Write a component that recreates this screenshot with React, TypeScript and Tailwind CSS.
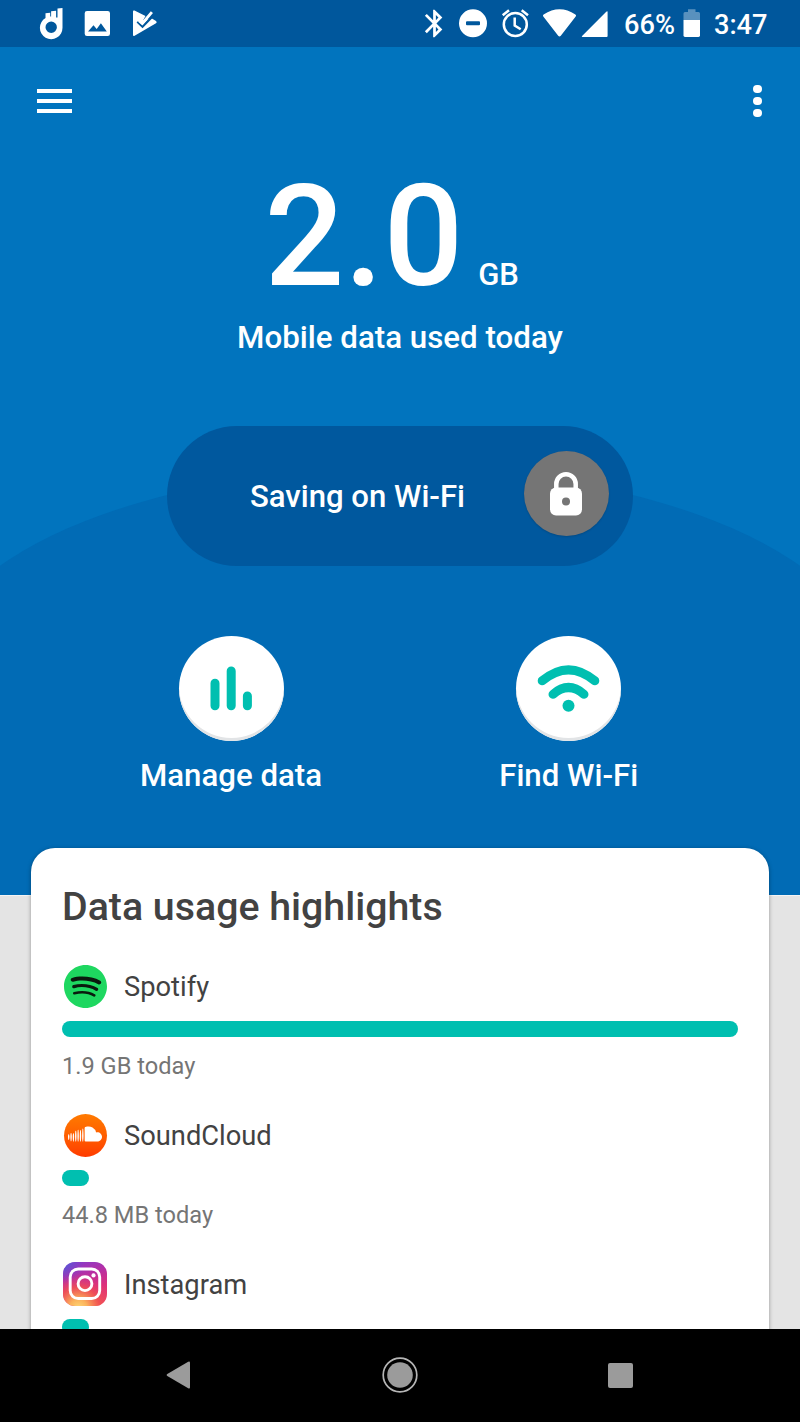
import { FC, ReactNode } from "react";
import { MdBluetooth } from "react-icons/md";
import { SiSoundcloud, SiSpotify } from "react-icons/si";

type AppUsage = {
  name: string;
  amount: string;
  percent: number;
  icon: ReactNode;
};

/* Status bar */
const StatusBar: FC = () => {
  return (
    <header className="flex h-[47px] shrink-0 items-center bg-[#00579c] text-white">
      <svg className="ml-9 h-[47px] w-[132px]" viewBox="36 0 132 47" fill="currentColor">
        {/* Hand */}
        <path d="M57.500 8.400 62.500 8v19.800a11.300 11.300 0 1 1-17-9.700v-4.900l4.700-.4v3.800h.9v-5.400l5-.4v6.600h1.400zM51.200 21.500a5.700 5.700 0 1 0 0 11.400 5.700 5.700 0 0 0 0-11.400z" fillRule="evenodd" />
        {/* Picture */}
        <path d="M87 11h20.700a2.300 2.300 0 0 1 2.300 2.300v20.400a2.300 2.300 0 0 1-2.300 2.300H87a2.300 2.300 0 0 1-2.300-2.300V13.300A2.300 2.300 0 0 1 87 11zM88 31.400h18.800l-5.900-8.200-4.200 5.800-3.200-3.800z" fillRule="evenodd" />
        {/* Play check */}
        <path d="M133 11.500q0-1.600 1.500-.9L145.500 16l-2.500 4.500 8.500-2.200 4.500 2.700q1.500 1.200 0 2.300L134.600 35.700q-1.600.8-1.600-1z" />
        <path d="m137.300 21.800 5.200 4.800L153 16" fill="none" stroke="#00579c" strokeWidth="2.200" />
        <path d="m139 20.600 3.300 2.900 9.600-11.300" fill="none" stroke="currentColor" strokeWidth="2.800" />
      </svg>
      <div className="ml-auto flex items-center">
        <MdBluetooth className="size-[33px]" />
        <svg className="ml-[8px] h-[47px] w-[150px]" viewBox="459 0 150 47" fill="currentColor">
          {/* Do not disturb */}
          <path d="M473 9.300a14 14 0 1 0 0 28 14 14 0 0 0 0-28zm-6 12h12q1 0 1 1v2q0 1-1 1h-12q-1 0-1-1v-2q0-1 1-1z" fillRule="evenodd" />
          {/* Alarm */}
          <g fill="none" stroke="currentColor" strokeWidth="2.500">
            <circle cx="515.300" cy="24.600" r="11.500" />
            <path d="M514.700 17.500v8l6 3.800M502.700 15.300l6.300-5M528 15.300l-6.300-5" />
          </g>
          {/* Wi-Fi */}
          <path d="M543.300 16.500q-1-1 .3-1.900 16-10.500 31.800 0 1.300.9.300 1.900L560.800 35.800q-1.300 1.300-2.600 0z" />
          {/* Signal */}
          <path d="M607.600 12v24q0 1-1 1h-24q-1.500 0-.5-1l23.900-24q1.600-1.300 1.600 0z" />
        </svg>
        <span className="mt-[4px] ml-[15px] w-[51px] text-[27.200px] leading-none font-medium">66%</span>
        <svg className="ml-[8px] h-[47px] w-[18px]" viewBox="683 0 18 47" fill="currentColor">
          <path d="M683.500 20v-6.500q0-1.500 1.500-1.500h3V9.300h7.500V12h3q1.500 0 1.500 1.500V20z" opacity=".35" />
          <path d="M683.500 20H700v15.600q0 1.400-1.500 1.400H685q-1.500 0-1.500-1.400z" />
        </svg>
        <span className="mt-[4px] mr-[30px] ml-[13px] w-[56px] text-[27.200px] leading-none font-medium">3:47</span>
      </div>
    </header>
  );
};

/* App bar */
const AppBar: FC = () => {
  return (
    <div className="flex h-[108px] items-center justify-between pr-[38.500px] pl-[37px]">
      <button className="flex flex-col gap-[6px]" aria-label="Menu">
        <span className="h-[4px] w-[35px] bg-white" />
        <span className="h-[4px] w-[35px] bg-white" />
        <span className="h-[4px] w-[35px] bg-white" />
      </button>
      <button className="flex flex-col gap-[3.500px]" aria-label="More options">
        <span className="size-[8.300px] rounded-full bg-white" />
        <span className="size-[8.300px] rounded-full bg-white" />
        <span className="size-[8.300px] rounded-full bg-white" />
      </button>
    </div>
  );
};

/* Round shortcut button with a label */
const Shortcut: FC<{ label: string; children: ReactNode }> = ({ label, children }) => {
  return (
    <div className="flex w-[200px] flex-col items-center">
      <button className="size-[105px] rounded-full bg-white shadow-[inset_0_-3px_0_#e2e4e6]">
        <svg className="size-[105px]" viewBox="0 0 105 105">
          {children}
        </svg>
      </button>
      <span className="mt-[15px] text-[31.200px] leading-10 font-medium whitespace-nowrap">{label}</span>
    </div>
  );
};

const Hero: FC = () => {
  return (
    <section className="relative h-[849px] shrink-0 overflow-hidden border-b border-[#f4f4f4] bg-[#0174be] text-white">
      {/* Darker dome behind the content */}
      <div className="absolute top-[421px] left-1/2 h-[440px] w-[940px] -translate-x-1/2 rounded-[470px_470px_0_0/206px_206px_0_0] bg-[#016bb5]" />

      <div className="relative flex flex-col">
        <AppBar />

        <div className="mt-[12px] flex h-[140px] items-baseline pl-[264.500px] font-medium">
          <span className="text-[140.500px] leading-[140px]">2.0</span>
          <span className="ml-[15px] text-[31px]">GB</span>
        </div>
        <p className="mt-[11px] text-center text-[31.300px] leading-10 font-medium">Mobile data used today</p>

        {/* Saving status */}
        <div className="mx-auto mt-[68px] flex h-[140px] w-[466px] items-center rounded-full bg-[#00589e] pr-6">
          <span className="mt-px ml-[83px] text-[31.100px] leading-10 font-medium">Saving on Wi-Fi</span>
          <div className="mb-[5px] ml-auto flex size-[85px] items-center justify-center rounded-full bg-[#757575] shadow-[0_1px_2px_rgba(0,0,0,0.15)]">
            <svg className="mr-px h-[44px] w-[34px]" viewBox="0 0 34 44">
              <path d="M7.300 18v-6a9.700 9.700 0 0 1 19.400 0v6" fill="none" stroke="#fff" strokeWidth="4.500" />
              <rect x="1" y="15.500" width="32" height="28" rx="6" fill="#fff" />
              <circle cx="17" cy="29.500" r="4" fill="#757575" />
            </svg>
          </div>
        </div>

        {/* Shortcuts */}
        <div className="mt-[70px] flex justify-between pr-[131.300px] pl-[131px]">
          <Shortcut label="Manage data">
            <g stroke="#00bfb0" strokeWidth="9" strokeLinecap="round">
              <path d="M36 47.300v22.500M52.200 35v34.800M68.400 60v9.800" />
            </g>
          </Shortcut>
          <Shortcut label="Find Wi-Fi">
            <g fill="none" stroke="#00bfb0" strokeWidth="9" strokeLinecap="round">
              <path d="M26.200 44.800q26.300-22 52.600 0M37 58.300q15.500-13.500 31 0" />
            </g>
            <circle cx="52.500" cy="69.800" r="6" fill="#00bfb0" />
          </Shortcut>
        </div>
      </div>
    </section>
  );
};

const SpotifyIcon: FC = () => {
  return (
    <div className="flex size-[43px] items-center justify-center rounded-full bg-[radial-gradient(circle,#0a1a0e_60%,transparent_61%)]">
      <SiSpotify className="size-[43px] text-[#1ed760]" />
    </div>
  );
};

const SoundCloudIcon: FC = () => {
  return (
    <div className="flex size-[43px] items-center justify-center rounded-full bg-linear-to-b from-[#ff7a00] to-[#ff3a00] pb-[3px]">
      <SiSoundcloud className="size-[34px] text-white" />
    </div>
  );
};

const InstagramIcon: FC = () => {
  return (
    <svg className="size-[44px]" viewBox="0 0 44 44">
      <defs>
        <linearGradient id="ig-base" x1="0.300" y1="0" x2="0.600" y2="1">
          <stop offset="0" stopColor="#8a3ac8" />
          <stop offset=".3" stopColor="#b52fa5" />
          <stop offset=".65" stopColor="#dd2f7b" />
          <stop offset="1" stopColor="#ee4a5c" />
        </linearGradient>
        <radialGradient id="ig-warm" cx=".35" cy="1.050" r=".8">
          <stop offset="0" stopColor="#fdd876" />
          <stop offset=".25" stopColor="#fbb35c" />
          <stop offset=".6" stopColor="#f2554e" stopOpacity=".8" />
          <stop offset="1" stopColor="#e0347a" stopOpacity="0" />
        </radialGradient>
        <radialGradient id="ig-cool" cx="0" cy="0" r=".5">
          <stop offset="0" stopColor="#4a62d8" />
          <stop offset="1" stopColor="#7a3fcb" stopOpacity="0" />
        </radialGradient>
      </defs>
      <rect width="44" height="44" rx="12" fill="url(#ig-base)" />
      <rect width="44" height="44" rx="12" fill="url(#ig-warm)" />
      <rect width="44" height="44" rx="12" fill="url(#ig-cool)" />
      <g fill="none" stroke="#fff" strokeWidth="2.900">
        <rect x="7.200" y="7" width="29.500" height="29.500" rx="8" />
        <circle cx="22" cy="21.700" r="6.900" />
      </g>
      <circle cx="30.500" cy="13.400" r="2.100" fill="#fff" />
    </svg>
  );
};

const usage: AppUsage[] = [
  { name: "Spotify", amount: "1.9 GB today", percent: 100, icon: <SpotifyIcon /> },
  { name: "SoundCloud", amount: "44.8 MB today", percent: 4, icon: <SoundCloudIcon /> },
  { name: "Instagram", amount: "", percent: 4, icon: <InstagramIcon /> },
];

const UsageRow: FC<{ item: AppUsage }> = ({ item }) => {
  return (
    <li className="flex flex-col">
      <div className="flex h-[46px] items-center">
        <div className="flex w-[46px] justify-center">{item.icon}</div>
        <span className="mt-px ml-4 text-[27.300px] leading-10 text-[#424242]">{item.name}</span>
      </div>
      <div className="mt-3 h-4 rounded-full bg-[#00bfb0]" style={{ width: `${item.percent}%` }} />
      <span className="mt-[14px] h-[30px] text-[23.600px] leading-[30px] text-[#757575]">{item.amount}</span>
    </li>
  );
};

/* Highlights card */
const Highlights: FC = () => {
  return (
    <section className="relative mx-[31px] -mt-[48px] h-[600px] shrink-0 rounded-t-3xl bg-white px-[31px] pt-[39px] shadow-[0_1px_4px_rgba(0,0,0,0.35)]">
      <h2 className="text-[39.300px] leading-10 font-medium text-[#424242]">Data usage highlights</h2>
      <ul className="mt-9 flex flex-col gap-[31px]">
        {usage.map((item) => (
          <UsageRow key={item.name} item={item} />
        ))}
      </ul>
    </section>
  );
};

/* Android navigation keys */
const NavBar: FC = () => {
  return (
    <nav className="flex h-[93px] shrink-0 items-center justify-between bg-black pr-[167px] pb-px pl-[166px]">
      <svg className="h-[28px] w-[25px]" viewBox="0 0 25 28" fill="#9b9b9b">
        <path d="M1.300 13 22.200.8Q24 0 24 1.800v24.500q0 1.800-1.800 1L1.300 15q-1.300-1 0-2z" />
      </svg>
      <svg className="size-[36px]" viewBox="0 0 36 36">
        <circle cx="18" cy="18" r="16.800" fill="none" stroke="#b5b5b5" strokeWidth="1.700" />
        <circle cx="18" cy="18" r="12.800" fill="#9b9b9b" />
      </svg>
      <span className="size-[25px] rounded-[2px] bg-[#9b9b9b]" />
    </nav>
  );
};

const App: FC = () => {
  return (
    <div className="flex h-[1422px] w-[800px] flex-col overflow-hidden bg-[#e4e4e4] font-['Roboto',sans-serif]">
      <StatusBar />
      <main className="flex min-h-0 flex-1 flex-col overflow-hidden">
        <Hero />
        <Highlights />
      </main>
      <NavBar />
    </div>
  );
};

export default App;
